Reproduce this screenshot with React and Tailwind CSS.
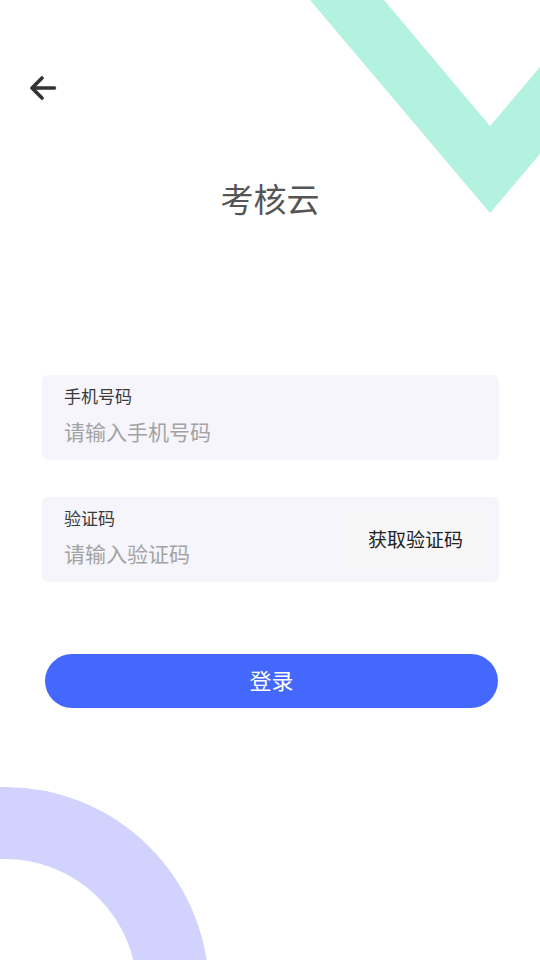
const font = { fontFamily: '"Noto Sans CJK SC", "Noto Sans", sans-serif' };

const Field = ({ label, placeholder, children }) => (
  <div className="flex items-center bg-[#f6f5fb] rounded-md h-[85px] pl-[22px] pr-[13px]">
    <div className="flex-1 self-start flex flex-col pt-[9px]">
      <span className="text-[17px] leading-[24px] text-[#3a3a3a]">{label}</span>
      <input
        className="mt-[9px] bg-transparent outline-none text-[21px] leading-[28px] text-[#333] placeholder:text-[#a3a3a3] w-full"
        placeholder={placeholder}
      />
    </div>
    {children}
  </div>
);

export default function App() {
  return (
    <div className="relative w-[540px] h-[960px] overflow-hidden bg-white" style={font}>
      {/* decorative shapes */}
      <svg className="absolute top-0 left-0" width="540" height="960" viewBox="0 0 540 960">
        <polygon points="310,0 384,0 490,126 540,67 540,154 490,213" fill="#b4f2e0" />
        <circle cx="5" cy="991" r="168" fill="none" stroke="#d1d2fe" strokeWidth="72" />
      </svg>

      <div className="relative">
        <div className="pt-[76px] pl-[29px]">
          <svg width="28" height="24" viewBox="0 0 28 24" fill="none">
            <path d="M25.5 12H3M13 2L3 12l10 10" stroke="#333" strokeWidth="3.6" strokeLinecap="round" strokeLinejoin="round" />
          </svg>
        </div>

        <h1 className="mt-[78px] text-center text-[33px] leading-[40px] text-[#555] font-normal">考核云</h1>

        <div className="mt-[157px] ml-[42px] w-[457px] flex flex-col gap-[37px]">
          <Field label="手机号码" placeholder="请输入手机号码" />
          <Field label="验证码" placeholder="请输入验证码">
            <button className="w-[141px] h-[58px] bg-[#f7f7f8] rounded-md text-[19px] text-[#222]">获取验证码</button>
          </Field>
        </div>

        <button className="mt-[72px] ml-[45px] w-[453px] h-[54px] rounded-full bg-[#4468fe] text-white text-[22px] leading-[54px] flex items-center justify-center pb-[4px]">
          登录
        </button>
      </div>
    </div>
  );
}
